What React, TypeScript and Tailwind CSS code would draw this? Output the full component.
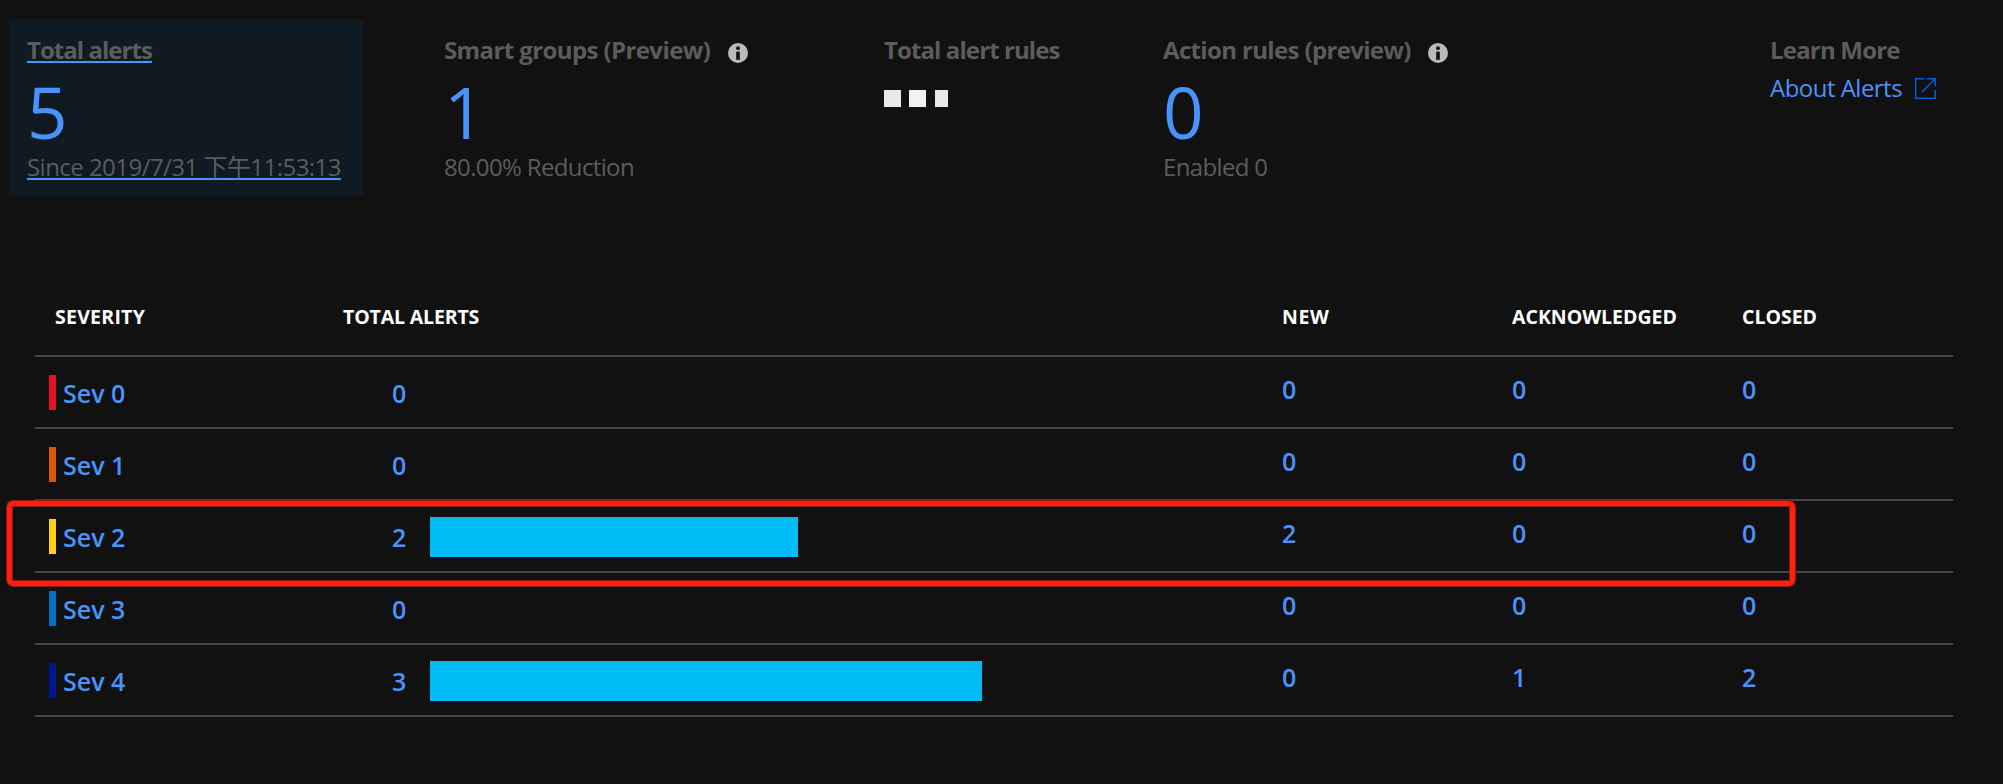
import type { ReactNode } from "react";

type Severity = {
  name: string;
  color: string;
  total: number;
  counts: number[];
};

const severities: Severity[] = [
  { name: "Sev 0", color: "bg-[#e81123]", total: 0, counts: [0, 0, 0] },
  { name: "Sev 1", color: "bg-[#dd5900]", total: 0, counts: [0, 0, 0] },
  { name: "Sev 2", color: "bg-[#fcd116]", total: 2, counts: [2, 0, 0] },
  { name: "Sev 3", color: "bg-[#0072c6]", total: 0, counts: [0, 0, 0] },
  { name: "Sev 4", color: "bg-[#00188f]", total: 3, counts: [0, 1, 2] },
];

const BAR_UNIT = 184;

const columns = "grid grid-cols-[308px_939px_230px_230px_211px]";

function InfoIcon({ className = "" }: { className?: string }) {
  return (
    <svg viewBox="0 0 20 20" className={`mt-[9px] size-5 shrink-0 ${className}`} aria-hidden="true">
      <circle cx="10" cy="10" r="10" fill="#bababa" />
      <circle cx="10" cy="5.2" r="1.9" fill="#111" />
      <path d="M8.2 8.6h3.6v8.2H8.2z" fill="#111" />
    </svg>
  );
}

function ExternalIcon() {
  return (
    <svg viewBox="0 0 21 21" className="size-[21px] shrink-0" fill="none" stroke="#015cda" strokeWidth="1.5" aria-hidden="true">
      <path d="M9 .75H.75v19.5h19.5V12" />
      <path d="M12 .75h8.25V8.5M20.25.75L6.8 14.2" />
    </svg>
  );
}

function Tile({ title, value, note, width }: { title: ReactNode; value?: ReactNode; note?: ReactNode; width: string }) {
  return (
    <section className={`flex shrink-0 flex-col pt-[15px] ${width}`}>
      <h2 className="flex h-[34px] items-start font-bold">{title}</h2>
      {value}
      {note}
    </section>
  );
}

function BigNumber({ children }: { children: ReactNode }) {
  return <div className="h-[85px] text-[71px] leading-[88px] text-[#4894fe]">{children}</div>;
}

export default function App() {
  return (
    <main className="relative h-[784px] w-[2003px] overflow-hidden bg-[#111111] font-['Open_Sans','Noto_Sans_CJK_SC',sans-serif] text-[24px] leading-8 whitespace-nowrap text-[#5c5c5c]">
      <div className="flex h-[196px] pt-[19px] pl-[9px]">
        <section className="flex w-[354px] shrink-0 flex-col bg-[#101a22] pt-[15px] pl-[18px]">
          <h2 className="h-[34px] font-bold">
            <span className="tracking-[-0.96px] underline decoration-[#4894fe] decoration-2 underline-offset-[2px] [text-decoration-skip-ink:none]">Total alerts</span>
          </h2>
          <BigNumber>5</BigNumber>
          <p className="h-7 leading-7">
            <span className="tracking-[-0.54px] underline decoration-[#4894fe] decoration-2 underline-offset-[2px] [text-decoration-skip-ink:none]">
              Since 2019/7/31 下午11:53:13
            </span>
          </p>
        </section>
        <div className="w-[81px] shrink-0" />
        <Tile
          width="w-[440px]"
          title={
            <>
              <span className="tracking-[-0.6px]">Smart groups (Preview)</span>
              <InfoIcon className="ml-[18px]" />
            </>
          }
          value={<BigNumber>1</BigNumber>}
          note={<p className="leading-7 tracking-[-0.64px]">80.00% Reduction</p>}
        />
        <Tile
          width="w-[279px]"
          title={<span className="tracking-[-0.9px]">Total alert rules</span>}
          value={
            <div className="flex pt-[22px]">
              <i className="mr-2 h-[17px] w-[17px] bg-[#e8e8e8]" />
              <i className="mr-[9px] h-[17px] w-[17px] bg-[#f2f2f2]" />
              <i className="h-[17px] w-[13px] bg-[#e8e8e8]" />
            </div>
          }
        />
        <Tile
          width="w-[607px]"
          title={
            <>
              <span className="tracking-[-0.65px]">Action rules (preview)</span>
              <InfoIcon className="ml-[17px]" />
            </>
          }
          value={<BigNumber>0</BigNumber>}
          note={<p className="leading-7 tracking-[-0.65px]">Enabled 0</p>}
        />
        <Tile
          width="w-[200px]"
          title={<span className="tracking-[-0.8px]">Learn More</span>}
          value={
            <a className="flex items-center pt-[4px] text-[#4894fe]">
              <span className="tracking-[-0.52px]">About Alerts</span>
              <span className="ml-[13px]">
                <ExternalIcon />
              </span>
            </a>
          }
        />
      </div>

      <div className="mt-[96px] ml-[35px] w-[1918px]">
        <div className={`${columns} h-[65px] border-b-2 border-[#444444] text-[19.5px] leading-[50px] font-bold text-white`}>
          <span className="pl-[20px] tracking-[0.25px]">SEVERITY</span>
          <span className="tracking-[-0.15px]">TOTAL ALERTS</span>
          <span className="tracking-[0.6px]">NEW</span>
          <span>ACKNOWLEDGED</span>
          <span>CLOSED</span>
        </div>
        {severities.map((s) => (
          <div key={s.name} className={`${columns} h-[72px] border-b-2 border-[#444444] text-[25px] leading-6 font-semibold text-[#4894fe]`}>
            <div className="flex pl-[14px]">
              <i className={`mt-[18px] h-[35px] w-[7px] ${s.color}`} />
              <span className="pt-6 pl-[7px]">{s.name}</span>
            </div>
            <div className="flex">
              <span className="w-[87px] pt-6 pl-[49px]">{s.total}</span>
              {s.total > 0 && <i className="mt-4 h-10 bg-[#00bcf6]" style={{ width: s.total * BAR_UNIT }} />}
            </div>
            {s.counts.map((n, i) => (
              <span key={i} className="pt-5">
                {n}
              </span>
            ))}
          </div>
        ))}
      </div>

      <div className="absolute top-[501px] left-[7px] h-[85px] w-[1788px] rounded-md border-5 border-[#ff1f10] shadow-[0_0_0_1px_#8a1a12,inset_0_0_0_1px_#8a1a12]" />
    </main>
  );
}
